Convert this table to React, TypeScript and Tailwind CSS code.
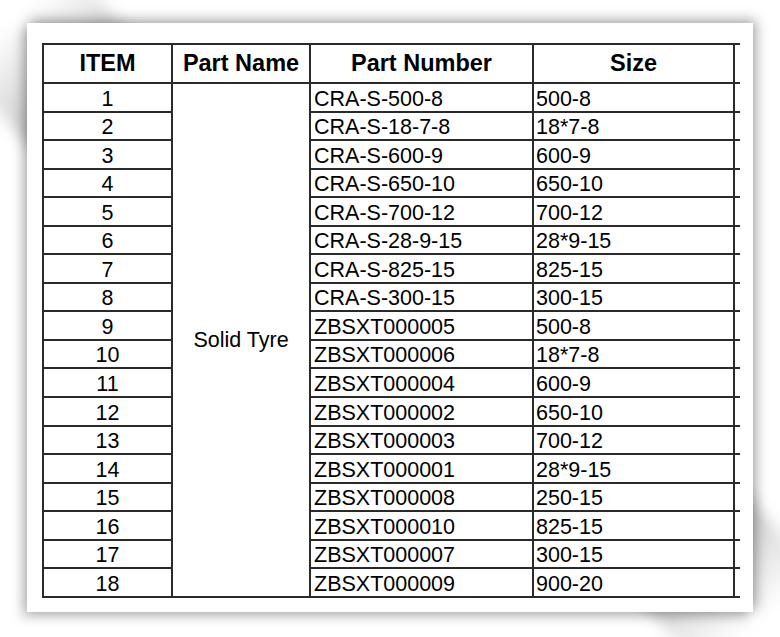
import React from "react";

const rows: [string, string][] = [
  ["CRA-S-500-8", "500-8"],
  ["CRA-S-18-7-8", "18*7-8"],
  ["CRA-S-600-9", "600-9"],
  ["CRA-S-650-10", "650-10"],
  ["CRA-S-700-12", "700-12"],
  ["CRA-S-28-9-15", "28*9-15"],
  ["CRA-S-825-15", "825-15"],
  ["CRA-S-300-15", "300-15"],
  ["ZBSXT000005", "500-8"],
  ["ZBSXT000006", "18*7-8"],
  ["ZBSXT000004", "600-9"],
  ["ZBSXT000002", "650-10"],
  ["ZBSXT000003", "700-12"],
  ["ZBSXT000001", "28*9-15"],
  ["ZBSXT000008", "250-15"],
  ["ZBSXT000010", "825-15"],
  ["ZBSXT000007", "300-15"],
  ["ZBSXT000009", "900-20"],
];

const cell = "border-2 border-[#2a2a2a]";

export default function App() {
  return (
    <div className="h-[637px] w-[780px] overflow-hidden bg-white pl-[27px] pt-[23px] font-['Liberation_Sans',Arial,sans-serif] text-black">
      <div className="relative h-[589px] w-[726px]">
        {/* curled-corner shading behind the sheet */}
        <div className="absolute -left-[50px] -top-[20px] h-[110px] w-[150px] -rotate-[40deg] bg-gradient-to-b from-transparent via-[#e2e2e2] to-[#c8c8c8] blur-[7px]" />
        <div className="absolute -bottom-[25px] -right-[45px] h-[110px] w-[150px] -rotate-[40deg] bg-gradient-to-t from-transparent via-[#e2e2e2] to-[#c8c8c8] blur-[7px]" />
        <div className="relative h-full w-full bg-white pl-[15px] pt-[20px] shadow-[3px_-3px_12px_rgba(0,0,0,0.35),-6px_6px_10px_rgba(0,0,0,0.18)]">
          <table className="w-[697px] table-fixed border-collapse">
            <colgroup>
              <col className="w-[129px]" />
              <col className="w-[138px]" />
              <col className="w-[223px]" />
              <col className="w-[201px]" />
              <col className="w-[6px]" />
            </colgroup>
            <thead>
              <tr className="h-[39px] text-[23.5px] font-bold">
                <th className={`${cell} align-middle`}>ITEM</th>
                <th className={`${cell} align-middle`}>Part Name</th>
                <th className={`${cell} align-middle`}>Part Number</th>
                <th className={`${cell} align-middle`}>Size</th>
                <th className="border-y-2 border-[#2a2a2a]" />
              </tr>
            </thead>
            <tbody className="text-[21.5px] leading-[24px]">
              {rows.map(([num, size], i) => (
                <tr key={num} className="h-[28.55px]">
                  <td className={`${cell} text-center align-bottom`}>{i + 1}</td>
                  {i === 0 && (
                    <td rowSpan={rows.length} className={`${cell} text-center align-middle`}>
                      Solid Tyre
                    </td>
                  )}
                  <td className={`${cell} whitespace-nowrap pl-[3px] align-bottom`}>{num}</td>
                  <td className={`${cell} whitespace-nowrap pl-[2px] align-bottom`}>{size}</td>
                  <td className="border-y-2 border-[#2a2a2a]" />
                </tr>
              ))}
            </tbody>
          </table>
        </div>
      </div>
    </div>
  );
}
